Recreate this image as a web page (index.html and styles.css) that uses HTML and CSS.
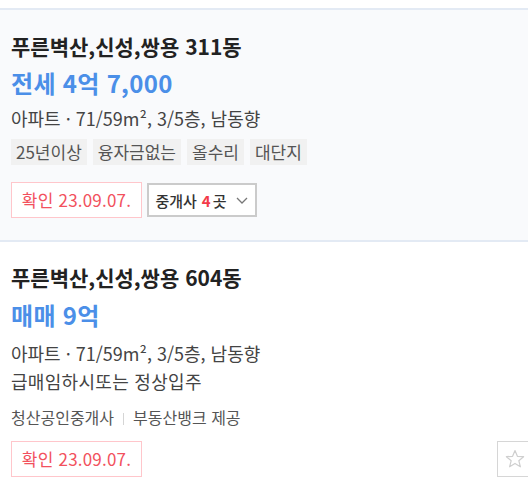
FILE: index.html
```html
<!DOCTYPE html>
<html lang="ko">
<head>
  <meta charset="UTF-8" />
  <title>매물 목록</title>
  <link rel="stylesheet" href="styles.css">
</head>
<body>
  <ul class="list">
    <li class="item item-active">
      <h3 class="item-title">푸른벽산,신성,쌍용 311동</h3>
      <p class="item-price">전세 4억 7,000</p>
      <p class="item-spec">아파트 · 71/59m², 3/5층, 남동향</p>
      <div class="tags">
        <span class="tag">25년이상</span>
        <span class="tag">융자금없는</span>
        <span class="tag">올수리</span>
        <span class="tag">대단지</span>
      </div>
      <div class="item-foot">
        <span class="confirm">확인 23.09.07.</span>
        <button class="agent-btn">중개사 <em>4</em>곳
          <svg width="14" height="14" viewBox="0 0 14 14"><path d="M2 5 L7 10 L12 5" fill="none" stroke="#777" stroke-width="1.3"/></svg>
        </button>
      </div>
    </li>
    <li class="item item-second">
      <h3 class="item-title">푸른벽산,신성,쌍용 604동</h3>
      <p class="item-price price-second">매매 9억</p>
      <p class="item-spec spec-second">아파트 · 71/59m², 3/5층, 남동향</p>
      <p class="item-desc">급매임하시또는 정상입주</p>
      <p class="item-agent">청산공인중개사<span class="sep"></span>부동산뱅크 제공</p>
      <div class="item-foot foot-second">
        <span class="confirm">확인 23.09.07.</span>
        <button class="star-btn" aria-label="관심">
          <svg width="22" height="22" viewBox="0 0 22 22"><path d="M11 2.5 L13.4 8.3 L19.6 8.7 L14.8 12.7 L16.4 18.8 L11 15.4 L5.6 18.8 L7.2 12.7 L2.4 8.7 L8.6 8.3 Z" fill="none" stroke="#cfcfcf" stroke-width="1.2" stroke-linejoin="round"/></svg>
        </button>
      </div>
    </li>
  </ul>
</body>
</html>
```

FILE: styles.css
```css
html, body {
  margin: 0;
  padding: 0;
  background: #fff;
  overflow: hidden;
}
body {
  font-family: "Noto Sans CJK KR", "Noto Sans", sans-serif;
  color: #222;
}
.list {
  list-style: none;
  margin: 0;
  padding: 8px 0 0;
}
.item {
  padding: 23px 0 22px 11px;
  border-bottom: 2px solid #e3eaf4;
  overflow: hidden;
}
.item-active {
  background-color: #f9fafc;
  border-top: 2px solid #e3eaf4;
}
.item-second {
  border-bottom: none;
  padding-top: 22px;
}
.item-title {
  margin: 0;
  font-size: 21px;
  line-height: 26px;
  font-weight: 700;
  color: #222;
}
.item-price {
  margin: 10px 0 0;
  font-size: 24px;
  line-height: 28px;
  font-weight: 700;
  color: #4b8fe8;
  letter-spacing: 0.3px;
}
.price-second {
  margin-top: 11px;
}
.item-spec {
  margin: 10px 0 0;
  font-size: 18px;
  line-height: 22px;
  color: #444;
}
.spec-second {
  margin-top: 13px;
}
.item-desc {
  margin: 6px 0 0;
  font-size: 18px;
  line-height: 22px;
  color: #444;
  letter-spacing: 0.3px;
}
.item-agent {
  margin: 14px 0 0;
  font-size: 16px;
  line-height: 22px;
  color: #555;
}
.sep {
  display: inline-block;
  width: 1px;
  height: 12px;
  background: #d5d5d5;
  margin: 0 9px;
  vertical-align: -1px;
}
.tags {
  display: flex;
  gap: 6px;
  margin-top: 10px;
}
.tag {
  background: #f1f1f1;
  color: #555;
  font-size: 17px;
  line-height: 26px;
  padding: 0 5px;
}
.item-foot {
  display: flex;
  align-items: center;
  gap: 5px;
  margin-top: 17px;
}
.foot-second {
  justify-content: space-between;
  margin-top: 13px;
}
.confirm {
  box-sizing: border-box;
  height: 36px;
  width: 131px;
  border: 1px solid #ffc6cb;
  color: #f2515d;
  font-size: 17px;
  line-height: 34px;
  text-align: center;
  background: #fff;
  letter-spacing: 0.2px;
}
.agent-btn {
  box-sizing: border-box;
  height: 34px;
  width: 110px;
  border: 2px solid #cbcbcb;
  background: #fff;
  font-family: inherit;
  font-size: 15px;
  font-weight: 500;
  color: #333;
  display: flex;
  align-items: center;
  justify-content: center;
  gap: 2px;
  padding: 0;
}
.agent-btn em {
  font-style: normal;
  font-weight: 700;
  color: #f33a4a;
  margin-left: 3px;
}
.agent-btn svg {
  margin-left: 6px;
}
.star-btn {
  box-sizing: border-box;
  width: 36px;
  height: 36px;
  margin-right: -5px;
  border: 1px solid #d6d6d6;
  background: #fff;
  padding: 0;
  display: flex;
  align-items: center;
  justify-content: center;
}
```
